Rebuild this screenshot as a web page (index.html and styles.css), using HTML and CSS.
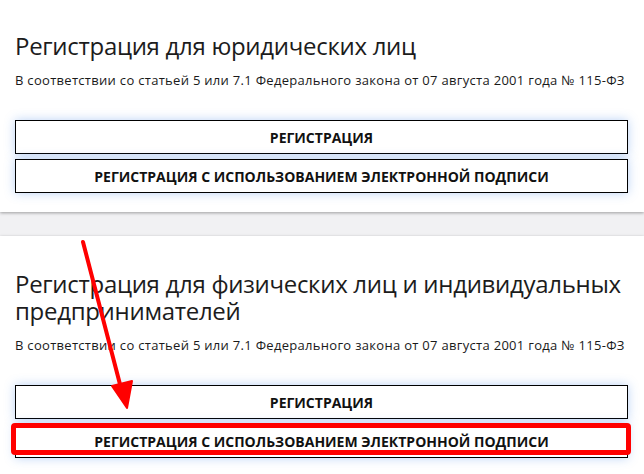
FILE: index.html
```html
<!DOCTYPE html>
<html lang="ru">
<head>
<meta charset="utf-8">
<link rel="stylesheet" href="styles.css">
</head>
<body>
<div class="page">
  <section class="card card-first">
    <h1 class="title">Регистрация для юридических лиц</h1>
    <p class="note">В соответствии со статьей 5 или 7.1 Федерального закона от 07 августа 2001 года № 115-ФЗ</p>
    <div class="actions">
      <a class="btn">РЕГИСТРАЦИЯ</a>
      <a class="btn">РЕГИСТРАЦИЯ С ИСПОЛЬЗОВАНИЕМ ЭЛЕКТРОННОЙ ПОДПИСИ</a>
    </div>
  </section>
  <section class="card">
    <h1 class="title">Регистрация для физических лиц и индивидуальных предпринимателей</h1>
    <p class="note">В соответствии со статьей 5 или 7.1 Федерального закона от 07 августа 2001 года № 115-ФЗ</p>
    <div class="actions">
      <a class="btn">РЕГИСТРАЦИЯ</a>
      <a class="btn btn-marked">РЕГИСТРАЦИЯ С ИСПОЛЬЗОВАНИЕМ ЭЛЕКТРОННОЙ ПОДПИСИ</a>
    </div>
  </section>
  <svg class="arrow" width="644" height="474" viewBox="0 0 644 474">
    <line x1="83" y1="242" x2="122" y2="392" stroke="#ff0000" stroke-width="4" stroke-linecap="round"/>
    <polygon points="112,386 132,381 127,408" fill="#ff0000" stroke="#ff0000" stroke-width="2" stroke-linejoin="round"/>
  </svg>
</div>
</body>
</html>
```
FILE: styles.css
```css
html, body {
  margin: 0;
  padding: 0;
}
body {
  background: #f1f1f3;
  font-family: "Open Sans", "Noto Sans", sans-serif;
  color: #111;
}
.page {
  position: relative;
  width: 644px;
  height: 474px;
  overflow: hidden;
}
.card {
  background: #fff;
  padding: 34px 16px 19px 15px;
  box-shadow: 0 1px 3px rgba(0, 0, 0, 0.35);
  margin-bottom: 24px;
}
.card-first {
  margin-top: -2px;
}
.title {
  margin: 0;
  font-size: 24px;
  font-weight: 400;
  line-height: 27px;
  color: #1c1c1c;
  letter-spacing: -0.3px;
}
.note {
  margin: 12px 0 0;
  font-size: 13px;
  line-height: 18px;
  letter-spacing: 0.3px;
  color: #1a1a1a;
}
.actions {
  margin-top: 31px;
  display: flex;
  flex-direction: column;
  gap: 5px;
}
.btn {
  display: flex;
  align-items: center;
  justify-content: center;
  box-sizing: border-box;
  height: 34px;
  border: 1px solid #000;
  background: #fff;
  font-size: 14px;
  font-weight: 700;
  color: #111;
  box-shadow: 0 0 10px rgba(60, 130, 230, 0.35);
}
.btn-marked {
  position: relative;
}
.btn-marked::after {
  content: "";
  position: absolute;
  left: -5px;
  right: -4px;
  top: -2px;
  bottom: 2px;
  border: 5px solid #ff0000;
  border-radius: 4px;
}
.arrow {
  position: absolute;
  left: 0;
  top: 0;
  pointer-events: none;
}
```
